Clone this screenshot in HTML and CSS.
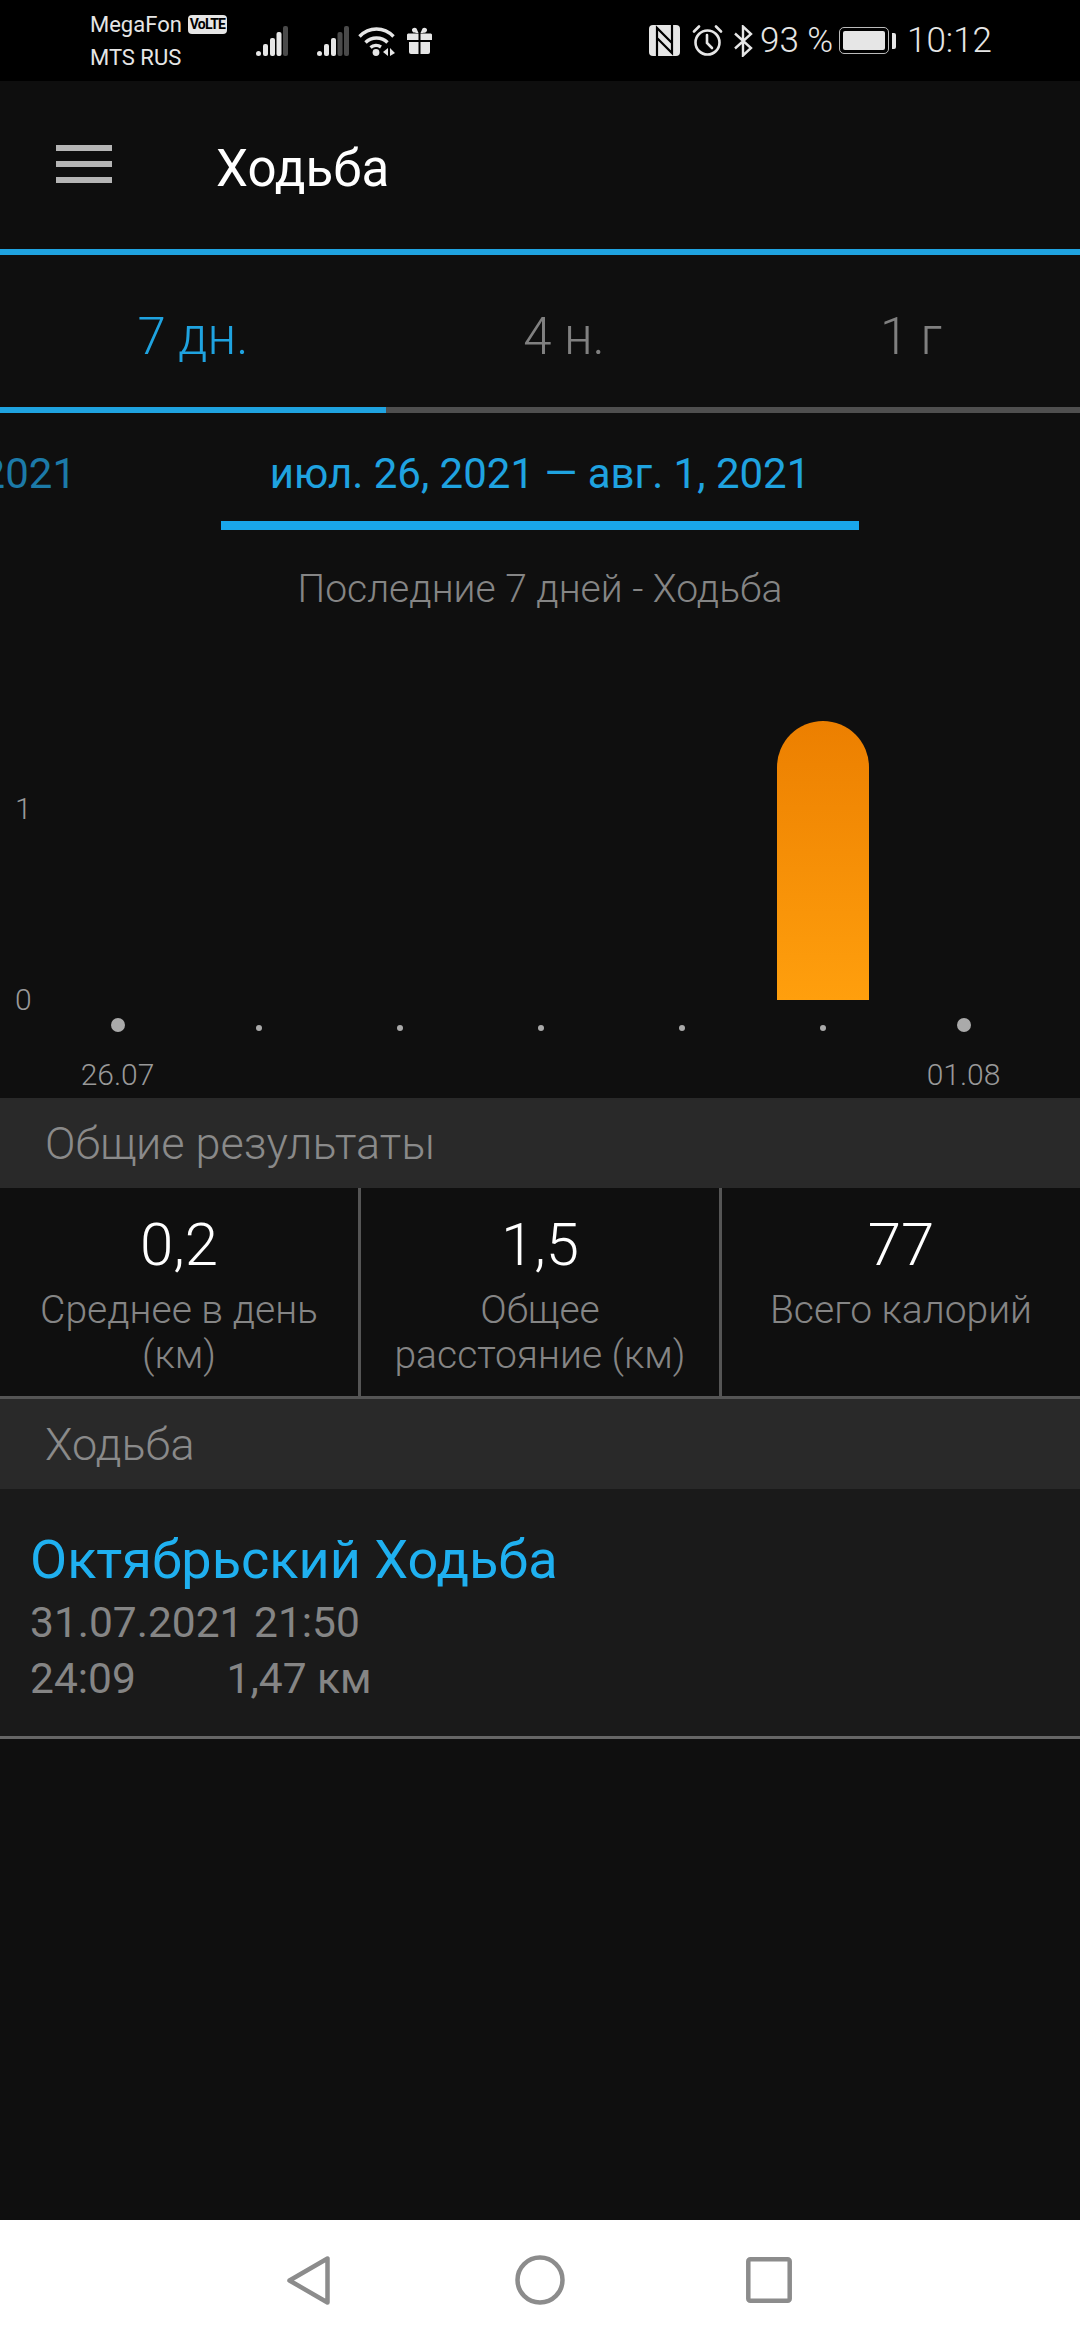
FILE: index.html
```html
<!DOCTYPE html>
<html lang="ru">
  <head>
    <meta charset="UTF-8" />
    <meta name="viewport" content="width=device-width, initial-scale=1.0" />
    <title>Ходьба</title>
    <link rel="stylesheet" href="styles.css">
  </head>
  <body>
    <div class="status-bar">
      <div class="carriers">
        <div class="carrier">MegaFon <span class="volte">VoLTE</span></div>
        <div class="carrier">MTS RUS</div>
      </div>
      <svg class="signal-one" width="32" height="30" viewBox="0 0 32 30">
        <rect x="0" y="25" width="5" height="5" rx="2.5" fill="#e6e6e6"/>
        <rect x="7" y="18" width="5" height="12" rx="2" fill="#e6e6e6"/>
        <rect x="14" y="12" width="5" height="18" rx="2" fill="#e6e6e6"/>
        <rect x="20.5" y="6" width="5" height="24" rx="2" fill="#e6e6e6"/>
        <rect x="27" y="0" width="5" height="30" rx="2" fill="#4a4a4a"/>
      </svg>
      <svg class="signal-two" width="32" height="30" viewBox="0 0 32 30">
        <rect x="0" y="25" width="5" height="5" rx="2.5" fill="#e6e6e6"/>
        <rect x="7" y="18" width="5" height="12" rx="2" fill="#e6e6e6"/>
        <rect x="14" y="12" width="5" height="18" rx="2" fill="#e6e6e6"/>
        <rect x="20.5" y="6" width="5" height="24" rx="2" fill="#4a4a4a"/>
        <rect x="27" y="0" width="5" height="30" rx="2" fill="#4a4a4a"/>
      </svg>
      <svg class="wifi" width="37" height="30" viewBox="0 0 37 30">
        <g fill="none" stroke="#e6e6e6" stroke-width="3.4">
          <path d="M1.5 10.5C11 .5 26 .5 35.5 10.5"/>
          <path d="M7.5 16.5C13.5 10.5 23.5 10.5 29.5 16.5"/>
          <path d="M12.5 21.5C15.5 19 20 19 23 21"/>
        </g>
        <circle cx="18" cy="26.5" r="3.4" fill="#e6e6e6"/>
        <path d="M30 22v8l-5-4zM32 22l5 5-5 3z" fill="#e6e6e6"/>
      </svg>
      <svg class="gift" width="25" height="27" viewBox="0 0 25 27">
        <path d="M11.5 6C9 6 5.5 6 5 3.5S8 0 9.5 1.5zM13.5 6C16 6 19.5 6 20 3.5S17 0 15.5 1.5z" fill="#e6e6e6"/>
        <path d="M1 6.5h10.5V13H0V7.5zM13.5 6.5H24l1 1V13H13.5zM2 15h9.5v12H4a2 2 0 0 1-2-2zM13.5 15H23v10a2 2 0 0 1-2 2h-7.5z" fill="#e6e6e6"/>
      </svg>
      <div class="status-right">
        <svg class="nfc" width="31" height="31" viewBox="0 0 31 31">
          <rect width="31" height="31" rx="4" fill="#e6e6e6"/>
          <path d="M8 31V3L23 18M23 0V28L8 13" fill="none" stroke="#000" stroke-width="2.2"/>
        </svg>
        <svg class="alarm" width="31" height="31" viewBox="0 0 31 31">
          <g fill="none" stroke="#e6e6e6" stroke-width="2.6" stroke-linecap="round">
            <circle cx="15.5" cy="17.5" r="12"/>
            <path d="M15 10v8l5 5"/>
            <path d="M2 6.5L7 1.5M29 6.5L24 1.5"/>
          </g>
        </svg>
        <svg class="bluetooth" width="19" height="32" viewBox="0 0 19 32">
          <path d="M1 8.5L17 23 9 30.5V1.5L17 9 1 23.5" fill="none" stroke="#e6e6e6" stroke-width="2.4"/>
        </svg>
        <span class="percent">93 %</span>
        <div class="battery"><div class="battery-fill"></div></div>
        <div class="battery-nub"></div>
        <span class="clock">10:12</span>
      </div>
    </div>

    <div class="app">
      <header class="toolbar">
        <div class="menu-icon">
          <span></span>
          <span></span>
          <span></span>
        </div>
        <h1>Ходьба</h1>
      </header>

      <div class="tabs">
        <div class="tab active">7 дн.</div>
        <div class="tab">4 н.</div>
        <div class="tab">1 г</div>
      </div>

      <div class="range-row">
        <div class="range-prev">июл. 19, 2021 — июл. 25, 2021</div>
        <div class="range-current">июл. 26, 2021 — авг. 1, 2021</div>
      </div>

      <div class="chart-title">Последние 7 дней - Ходьба</div>

      <div class="chart">
        <div class="y-axis">
          <span>1</span>
          <span>0</span>
        </div>
        <div class="plot">
          <div class="day"><div class="bar-slot"></div><i class="dot big"></i><span class="day-label">26.07</span></div>
          <div class="day"><div class="bar-slot"></div><i class="dot"></i></div>
          <div class="day"><div class="bar-slot"></div><i class="dot"></i></div>
          <div class="day"><div class="bar-slot"></div><i class="dot"></i></div>
          <div class="day"><div class="bar-slot"></div><i class="dot"></i></div>
          <div class="day"><div class="bar-slot"><div class="bar"></div></div><i class="dot"></i></div>
          <div class="day"><div class="bar-slot"></div><i class="dot big"></i><span class="day-label">01.08</span></div>
        </div>
      </div>

      <div class="section-head">Общие результаты</div>
      <div class="stats">
        <div class="stat">
          <div class="stat-value">0,2</div>
          <div class="stat-label">Среднее в день (км)</div>
        </div>
        <div class="stat">
          <div class="stat-value">1,5</div>
          <div class="stat-label">Общее расстояние (км)</div>
        </div>
        <div class="stat">
          <div class="stat-value">77</div>
          <div class="stat-label">Всего калорий</div>
        </div>
      </div>

      <div class="section-head">Ходьба</div>
      <div class="activity">
        <div class="activity-name">Октябрьский Ходьба</div>
        <div class="activity-line">31.07.2021 21:50</div>
        <div class="activity-line">
          <span class="activity-time">24:09</span>
          <span>1,47 км</span>
        </div>
      </div>
    </div>

    <nav class="nav-bar">
      <svg width="43" height="49" viewBox="0 0 43 49">
        <path d="M40.5 2.5V46.5L2.5 24.5z" fill="none" stroke="#8c8c8c" stroke-width="4.5" stroke-linejoin="round"/>
      </svg>
      <svg width="50" height="50" viewBox="0 0 50 50">
        <circle cx="25" cy="25" r="22.5" fill="none" stroke="#8c8c8c" stroke-width="4.5"/>
      </svg>
      <svg class="nav-square" width="46" height="46" viewBox="0 0 46 46">
        <rect x="2.3" y="2.3" width="41.4" height="41.4" rx="2" fill="none" stroke="#8c8c8c" stroke-width="4.5"/>
      </svg>
    </nav>
  </body>
</html>
```

FILE: styles.css
```css
* {
  box-sizing: border-box;
  margin: 0;
  padding: 0;
}

body {
  display: flex;
  flex-direction: column;
  width: 1080px;
  height: 2340px;
  overflow: hidden;
  background: #0f0f0f;
  font-family: Roboto, "Noto Sans", sans-serif;
  font-weight: 300;
}

/* status bar */
.status-bar {
  display: flex;
  align-items: center;
  flex: none;
  height: 81px;
  padding-left: 90px;
  background: #000;
  color: #e6e6e6;
}

.carriers {
  width: 166px;
  font-size: 22px;
  font-weight: 400;
  line-height: 33px;
}

.carrier {
  display: flex;
  align-items: center;
  gap: 6px;
  white-space: nowrap;
}

.volte {
  padding: 0 2px;
  height: 19px;
  background: #e6e6e6;
  border-radius: 4px;
  color: #000;
  font-size: 14px;
  font-weight: 700;
  line-height: 19px;
  letter-spacing: -0.8px;
}

.signal-one,
.signal-two,
.wifi,
.gift {
  flex: none;
}

.signal-two {
  margin-left: 29px;
}

.wifi {
  margin-left: 9px;
}

.gift {
  margin-left: 12px;
}

.status-right {
  display: flex;
  align-items: center;
  margin-left: 217px;
  font-size: 35px;
  font-weight: 300;
}

.alarm {
  margin-left: 12px;
}

.bluetooth {
  margin-left: 11px;
}

.percent {
  margin-left: 7px;
  width: 72px;
  white-space: nowrap;
}

.battery {
  width: 50px;
  height: 27px;
  padding: 3px;
  margin-left: 7px;
  border: 1.5px solid #bbb;
  border-radius: 5px;
}

.battery-fill {
  height: 100%;
  background: #e6e6e6;
  border-radius: 2px;
}

.battery-nub {
  width: 4px;
  height: 16px;
  margin-left: 3px;
  background: #e6e6e6;
  border-radius: 0 2px 2px 0;
}

.clock {
  margin-left: 11px;
}

/* app content */
.app {
  display: flex;
  flex-direction: column;
  flex: 1;
  min-height: 0;
}

.toolbar {
  display: flex;
  align-items: center;
  flex: none;
  height: 174px;
  padding: 0 0 2px 56px;
  background: #0e0e0e;
  border-bottom: 6px solid #1fa3e0;
}

.menu-icon {
  display: flex;
  flex-direction: column;
  gap: 10px;
  width: 56px;
}

.menu-icon span {
  display: block;
  height: 6px;
  background: #b5b5b5;
}

h1 {
  margin: 8px 0 0 104px;
  color: #fff;
  font-size: 51px;
  font-weight: 400;
}

.tabs {
  display: grid;
  grid-template-columns: 386px 356px 338px;
  flex: none;
  height: 158px;
}

.tab {
  padding-top: 53px;
  border-bottom: 6px solid #4f4f4f;
  color: #808080;
  font-size: 51px;
  line-height: 58px;
  text-align: center;
}

.tab.active {
  border-bottom-color: #1fa3e0;
  color: #1fa3e0;
}

.range-row {
  display: flex;
  flex: none;
  height: 117px;
  overflow: hidden;
  font-size: 42px;
  font-weight: 400;
}

.range-prev {
  display: flex;
  justify-content: flex-end;
  flex: none;
  width: 221px;
  padding: 36px 145px 0 0;
  color: #1c7aa8;
  white-space: nowrap;
}

.range-current {
  flex: none;
  width: 638px;
  padding-top: 36px;
  border-bottom: 9px solid #19a6ea;
  color: #1fa3e0;
  text-align: center;
  white-space: nowrap;
}

.chart-title {
  flex: none;
  padding-top: 37px;
  color: #858585;
  font-size: 39px;
  line-height: 45px;
  text-align: center;
}

/* chart */
.chart {
  display: flex;
  flex: none;
  height: 486px;
}

.y-axis {
  display: flex;
  flex-direction: column;
  justify-content: space-between;
  flex: none;
  width: 47px;
  height: 227px;
  margin-top: 179px;
  padding-left: 15px;
  color: #999;
  font-size: 30px;
  line-height: 36px;
}

.plot {
  display: grid;
  grid-template-columns: repeat(7, 141px);
}

.day {
  display: flex;
  flex-direction: column;
  align-items: center;
}

.bar-slot {
  display: flex;
  align-items: flex-end;
  height: 388px;
}

.bar {
  width: 92px;
  height: 279px;
  background: linear-gradient(to bottom, #ec7f00, #ff9f0d);
  border-radius: 46px 46px 0 0;
}

.dot {
  width: 6px;
  height: 6px;
  margin-top: 25px;
  background: #aaa;
  border-radius: 50%;
}

.dot.big {
  width: 14px;
  height: 14px;
  margin-top: 18px;
}

.day-label {
  margin-top: 25px;
  color: #999;
  font-size: 30px;
  line-height: 36px;
}

/* totals and activity list */
.section-head {
  flex: none;
  height: 90px;
  padding: 25px 0 0 45px;
  background: #292929;
  color: #8a8a8a;
  font-size: 45px;
  line-height: 42px;
}

.stats {
  display: grid;
  grid-template-columns: 361px 361px 358px;
  flex: none;
  height: 211px;
  border-bottom: 3px solid #555;
}

.stat {
  padding: 25px 20px 0;
  border-right: 3px solid #555;
  text-align: center;
}

.stat:last-child {
  border-right: none;
}

.stat-value {
  color: #fff;
  font-size: 60px;
  line-height: 64px;
}

.stat-label {
  margin-top: 11px;
  color: #858585;
  font-size: 39px;
  line-height: 45px;
}

.activity {
  flex: none;
  height: 250px;
  padding: 35px 0 0 30px;
  background: #1a1a1a;
  border-bottom: 3px solid #666;
  color: #858585;
  font-size: 42.5px;
  font-weight: 400;
  line-height: 56px;
}

.activity-name {
  color: #1fb0f0;
  font-size: 54px;
  line-height: 71px;
}

.activity-time {
  display: inline-block;
  width: 186px;
}

.nav-bar {
  display: flex;
  align-items: center;
  flex: none;
  gap: 185px;
  height: 120px;
  padding-left: 287px;
  background: #fff;
}

.nav-square {
  margin-left: -4px;
}
```
